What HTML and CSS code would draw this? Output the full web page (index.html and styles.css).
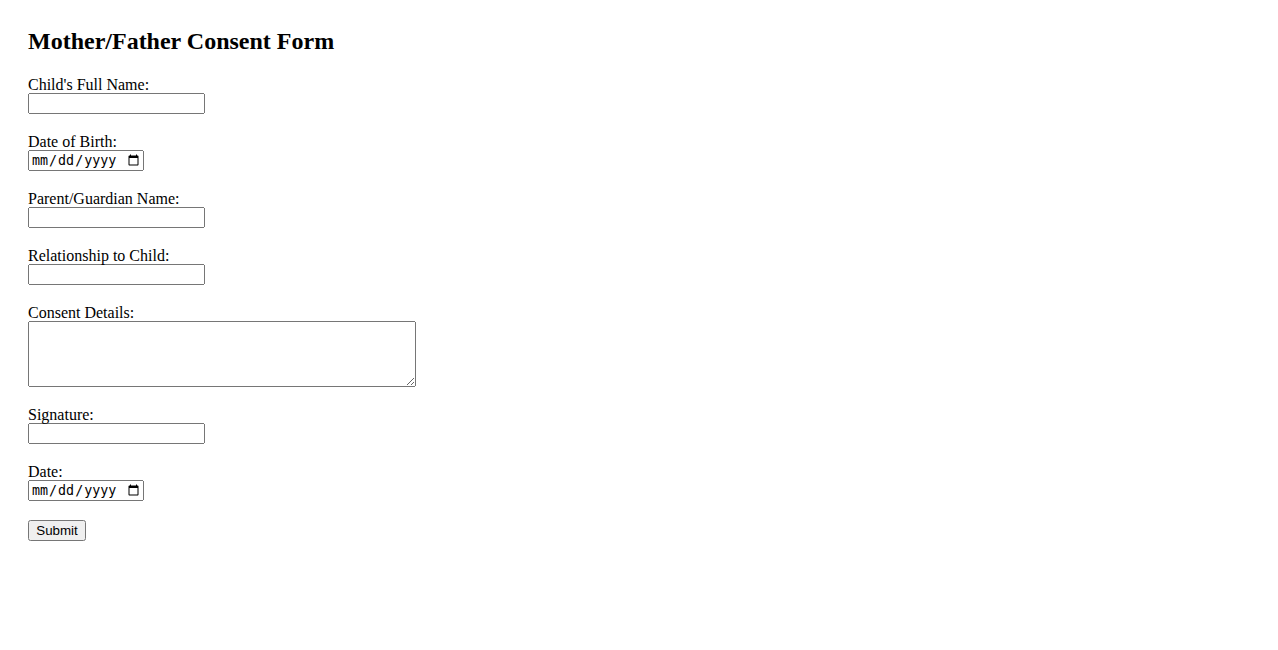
FILE: index.html
```html
<!DOCTYPE html>
<html>
<head>
<meta charset="utf-8">
<title>Mother/Father Consent Form</title>
<link rel="stylesheet" href="styles.css">
</head>
<body>
<div class="page">
  <h2 class="title">Mother/Father Consent Form</h2>
  <form class="form">
    <div class="field">
      <label class="label" for="child">Child's Full Name:</label>
      <input class="text" type="text" id="child">
    </div>
    <div class="field">
      <label class="label" for="dob">Date of Birth:</label>
      <input class="date" type="date" id="dob">
    </div>
    <div class="field">
      <label class="label" for="parent">Parent/Guardian Name:</label>
      <input class="text" type="text" id="parent">
    </div>
    <div class="field">
      <label class="label" for="rel">Relationship to Child:</label>
      <input class="text" type="text" id="rel">
    </div>
    <div class="field">
      <label class="label" for="details">Consent Details:</label>
      <textarea class="area" id="details"></textarea>
    </div>
    <div class="field">
      <label class="label" for="sig">Signature:</label>
      <input class="text" type="text" id="sig">
    </div>
    <div class="field field-last">
      <label class="label" for="date">Date:</label>
      <input class="date" type="date" id="date">
    </div>
    <button class="submit" type="submit">Submit</button>
  </form>
</div>
</body>
</html>
```
FILE: styles.css
```css
html, body {
  background: #fff;
}
body {
  margin: 8px;
  font-family: "Liberation Serif", "Times New Roman", serif;
  font-size: 16px;
  color: #000;
}
.page {
  padding: 20px;
}
.title {
  margin: 0 0 21px;
  font-size: 24px;
  font-weight: bold;
  line-height: 26px;
}
.form {
  margin: 0;
}
.field {
  margin-bottom: 17.6px;
}
.field-last {
  margin-bottom: 19px;
}
.label {
  display: block;
  padding-top: 1px;
  line-height: 17.4px;
}
.text,
.date,
.area,
.submit {
  display: block;
  margin: 0;
  box-sizing: border-box;
}
.text {
  width: 177px;
  height: 21px;
}
.date {
  width: 116px;
  height: 21px;
}
.area {
  width: 388px;
  height: 66px;
}
.submit {
  width: 58px;
  height: 21px;
  padding: 1px 6px;
  font-family: "Liberation Sans", Arial, sans-serif;
  font-size: 13.33px;
}
```
